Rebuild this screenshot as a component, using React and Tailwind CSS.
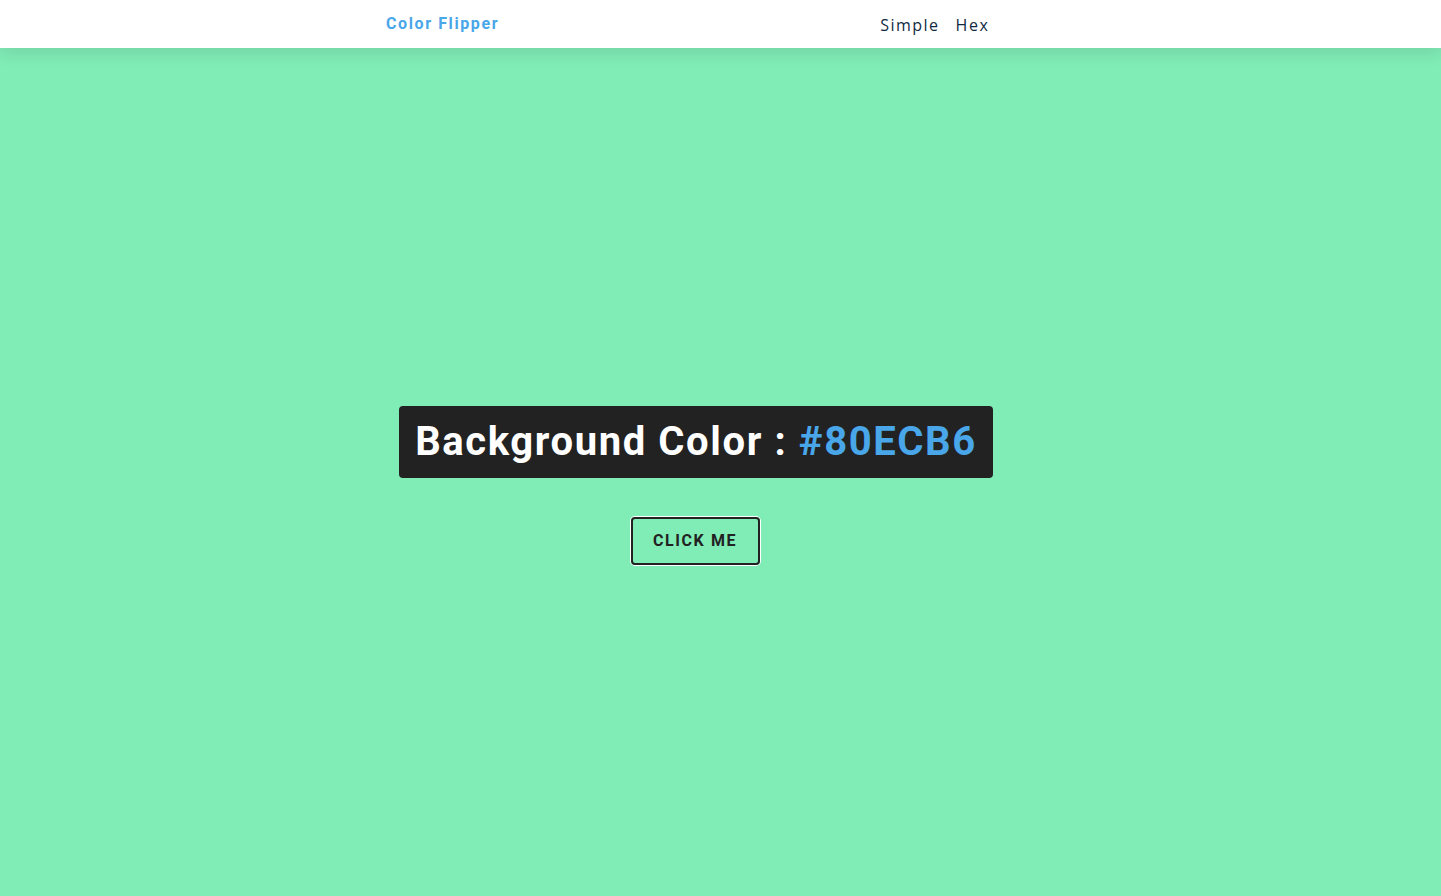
import React from "react";

export default function App() {
  return (
    <div className="min-h-screen w-full bg-[#80ECB6] flex flex-col" style={{ minHeight: 896 }}>
      <nav className="h-12 bg-white shadow-[0_5px_15px_rgba(0,0,0,0.1)] relative z-10">
        <div className="h-full flex items-center pl-[386px]">
          <h4 className="font-['Roboto',sans-serif] font-bold text-[16px] tracking-[1.6px] text-[#49a6e9] leading-none pb-[1px]">
            Color Flipper
          </h4>
          <ul className="flex ml-[381px] gap-[16px] font-['Open_Sans',sans-serif] font-medium text-[16px] tracking-[1.5px] text-[#102a42] leading-none pt-[2px]">
            <li>Simple</li>
            <li>Hex</li>
          </ul>
        </div>
      </nav>
      <main className="flex-1 flex flex-col items-center pt-[358px] pr-[49px]">
        <h2 className="bg-[#222222] rounded-[4px] px-4 py-[11px] font-['Roboto',sans-serif] font-bold text-[40px] leading-[50px] tracking-[1.6px] text-white">
          Background Color : <span className="text-[#49a6e9]">#80ECB6</span>
        </h2>
        <button className="mt-[39px] -ml-[2px] w-[129px] h-[48px] border-2 border-[#222222] rounded-[4px] shadow-[0_0_0_1px_#ffffff] font-['Roboto',sans-serif] font-bold text-[16px] tracking-[1.6px] text-[#222222] uppercase">
          click me
        </button>
      </main>
    </div>
  );
}
